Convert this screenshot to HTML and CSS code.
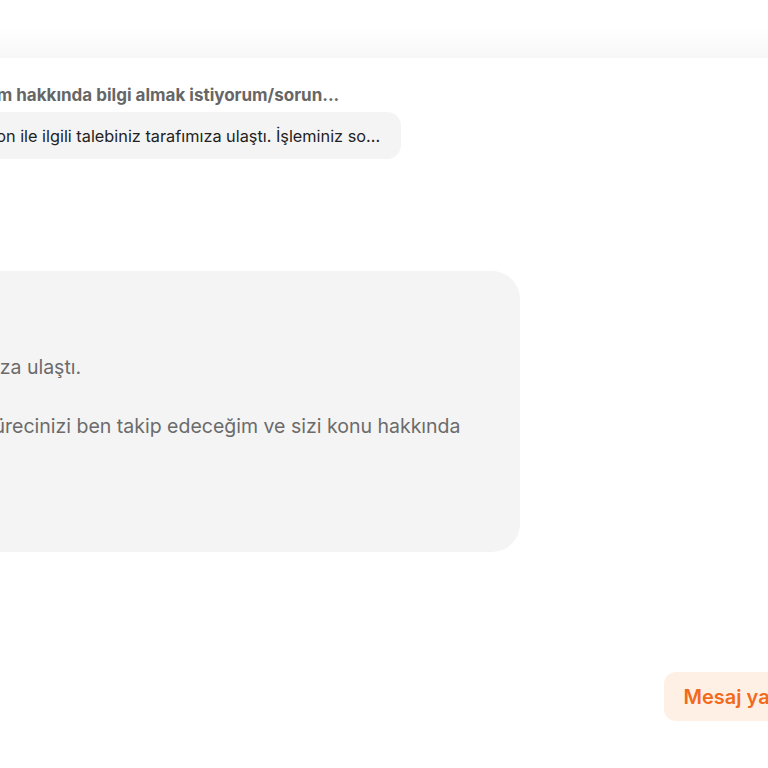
FILE: index.html
```html
<!DOCTYPE html>
<html lang="tr">
<head>
<meta charset="utf-8">
<title>Mesajlar</title>
<link rel="stylesheet" href="styles.css">
</head>
<body>
<header class="topbar"></header>
<main class="chat">
  <section class="ref">
    <div class="ref-title">Sipariş, iade, kampanyalarım hakkında bilgi almak istiyorum/sorun...</div>
    <div class="ref-snippet">Sipariş ve kampanya/promosyon ile ilgili talebiniz tarafımıza ulaştı. İşleminiz so...</div>
  </section>
  <section class="bubble">
    <p>Merhaba,</p>
    <p>Bilgi alma talebiniz tarafımıza ulaştı.</p>
    <p>Bu noktadan sonra talep sürecinizi ben takip edeceğim ve sizi konu hakkında bilgilendireceğim.</p>
    <p>İyi günler dilerim.</p>
  </section>
  <div class="composer">
    <button class="write-btn" type="button">Mesaj yaz</button>
  </div>
</main>
</body>
</html>
```

FILE: styles.css
```css
html, body {
  margin: 0;
  padding: 0;
}
body {
  width: 768px;
  height: 768px;
  overflow: hidden;
  background: #ffffff;
  font-family: Inter, "Noto Sans", "Liberation Sans", sans-serif;
  color: #222222;
}
.topbar {
  height: 58px;
  background: linear-gradient(to bottom, #ffffff 0%, #ffffff 48%, #f7f7f7 100%);
}
.chat {
  margin-left: -268px;
  width: 1069px;
}
.ref {
  padding: 27px 0 0 41px;
}
.ref-title {
  font-size: 17px;
  font-weight: 700;
  line-height: 20px;
  color: #666666;
  white-space: nowrap;
  margin-bottom: 7px;
}
.ref-snippet {
  display: flex;
  align-items: center;
  width: fit-content;
  height: 47px;
  padding: 0 21px 0 16px;
  margin-left: -25px;
  background: #f4f4f4;
  border-radius: 14px;
  font-size: 16.3px;
  color: #222222;
  white-space: nowrap;
}
.bubble {
  margin-top: 112px;
  width: 788px;
  box-sizing: border-box;
  padding: 23px 24px 22px 22px;
  background: #f4f4f4;
  border-radius: 28px;
  font-size: 19.5px;
  line-height: 29.5px;
  color: #6b6b6b;
}
.bubble p {
  margin: 0 0 29.5px 0;
}
.bubble p:last-child {
  margin-bottom: 0;
}
.composer {
  margin-top: 120px;
  display: flex;
  justify-content: flex-end;
}
.write-btn {
  height: 49px;
  padding: 0 20px;
  border: none;
  border-radius: 12px;
  background: #fff0e6;
  color: #f26b1d;
  font-family: Inter, "Noto Sans", sans-serif;
  font-size: 20px;
  font-weight: 600;
}
```
